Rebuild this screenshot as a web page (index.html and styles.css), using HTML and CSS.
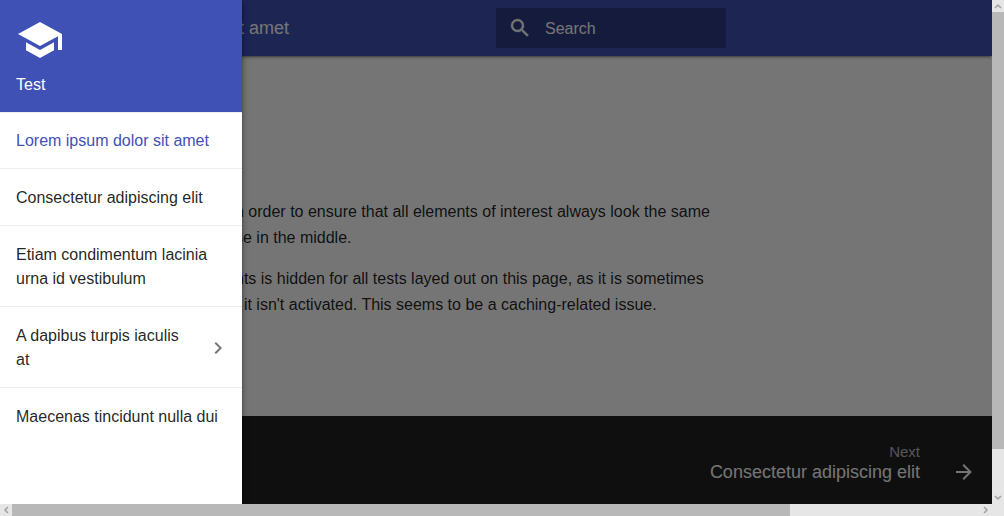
FILE: index.html
```html
<!DOCTYPE html>
<html lang="en">
<head>
<meta charset="utf-8">
<meta name="viewport" content="width=device-width, initial-scale=1">
<title>Lorem ipsum dolor sit amet</title>
<link rel="stylesheet" href="styles.css">
</head>
<body>
<div class="frame">
  <div class="page">
    <header class="header">
      <span class="header-title">Lorem ipsum dolor sit amet</span>
      <label class="search">
        <svg class="icon search-icon" viewBox="0 0 24 24" aria-hidden="true"><path d="M9.500 3A6.500 6.500 0 0 1 16 9.500c0 1.610-.590 3.090-1.560 4.230l.270.270h.790l5 5-1.500 1.500-5-5v-.790l-.270-.270A6.520 6.520 0 0 1 9.500 16a6.500 6.500 0 0 1 0-13m0 2C7 5 5 7 5 9.500S7 14 9.500 14 14 12 14 9.500 12 5 9.500 5z"/></svg>
        <input class="search-input" type="text" placeholder="Search" aria-label="Search">
      </label>
    </header>
    <main class="content">
      <p>n order to ensure that all elements of interest always look the same<br>se in the middle.</p>
      <p>nts is hidden for all tests layed out on this page, as it is sometimes<br>f it isn't activated. This seems to be a caching-related issue.</p>
    </main>
    <footer class="footer">
      <a class="next" href="#next">
        <span class="next-text"><span class="next-label">Next</span><span class="next-title">Consectetur adipiscing elit</span></span>
        <svg class="icon" viewBox="0 0 24 24" aria-hidden="true"><path d="M4 11v2h12l-5.500 5.500 1.420 1.420L19.840 12l-7.920-7.920L10.500 5.500 16 11H4z"/></svg>
      </a>
    </footer>
    <div class="overlay"></div>
    <nav class="drawer" aria-label="Navigation">
      <div class="drawer-head">
        <svg class="logo" viewBox="0 0 24 24" aria-hidden="true"><path d="M12 3L1 9l11 6 9-4.910V17h2V9M5 13.180v4L12 21l7-3.820v-4L12 17l-7-3.820z"/></svg>
        <span>Test</span>
      </div>
      <ul class="nav-list">
        <li><a class="active" href="#lorem">Lorem ipsum dolor sit amet</a></li>
        <li><a href="#consectetur">Consectetur adipiscing elit</a></li>
        <li><a href="#etiam">Etiam condimentum lacinia urna id vestibulum</a></li>
        <li><a class="nested" href="#dapibus"><span>A dapibus turpis iaculis at</span><svg class="chevron" viewBox="0 0 24 24" aria-hidden="true"><path d="M8.590 16.580L13.170 12 8.590 7.410 10 6l6 6-6 6-1.410-1.420z"/></svg></a></li>
        <li><a href="#maecenas">Maecenas tincidunt nulla dui</a></li>
      </ul>
    </nav>
  </div>
  <div class="bar bar-vertical">
    <svg class="arrow" viewBox="0 0 12 12" aria-hidden="true"><path d="M3 8l3-3 3 3"/></svg>
    <div class="track"><div class="thumb"></div></div>
    <svg class="arrow" viewBox="0 0 12 12" aria-hidden="true"><path d="M3 4l3 3 3-3"/></svg>
  </div>
  <div class="bar bar-horizontal">
    <svg class="arrow" viewBox="0 0 12 12" aria-hidden="true"><path d="M8 3L5 6l3 3"/></svg>
    <div class="track"><div class="thumb"></div></div>
    <svg class="arrow" viewBox="0 0 12 12" aria-hidden="true"><path d="M4 3l3 3-3 3"/></svg>
  </div>
</div>
</body>
</html>
```
FILE: styles.css
```css
* { box-sizing: border-box; }

body {
  margin: 0;
  font: 16px/24px "Liberation Sans", Arial, sans-serif;
  color: rgba(0, 0, 0, 0.87);
}

a { color: inherit; text-decoration: none; }

.frame {
  display: grid;
  grid-template: minmax(0, 1fr) 12px / minmax(0, 1fr) 12px;
  height: 100vh;
  overflow: hidden;
  background: #e6e6e6;
}

.page {
  position: relative;
  display: flex;
  flex-direction: column;
  overflow: hidden;
  background: #fff;
}

.header {
  display: flex;
  align-items: center;
  justify-content: space-between;
  height: 56px;
  padding: 0 266px 0 72px;
  background: #3f51b5;
  color: #fff;
  box-shadow: 0 2px 2px rgba(0, 0, 0, 0.14), 0 1px 5px rgba(0, 0, 0, 0.12), 0 3px 1px -2px rgba(0, 0, 0, 0.2);
  z-index: 1;
}

.header-title { font-size: 18px; white-space: nowrap; }

.search {
  display: flex;
  align-items: center;
  gap: 13px;
  width: 230px;
  height: 40px;
  padding: 0 12px;
  border-radius: 2px;
  background: rgba(0, 0, 0, 0.26);
}

.icon { flex: none; width: 24px; height: 24px; fill: currentColor; }

.search-icon { stroke: currentColor; stroke-width: 0.4; }

.search-input {
  flex: 1;
  min-width: 0;
  padding: 2px 0 0;
  border: 0;
  outline: 0;
  background: none;
  font: inherit;
  color: inherit;
}

.search-input::placeholder { color: inherit; opacity: 1; }

.content {
  flex: 1;
  padding: 143px 0 0 235px;
  line-height: 26px;
  white-space: nowrap;
}

.content p { margin: 0 0 15px; }

.footer {
  display: flex;
  justify-content: flex-end;
  height: 88px;
  padding: 24px 16px 0;
  background: #212121;
  color: #fff;
}

.next { display: flex; align-items: flex-end; gap: 32px; height: 44px; }

.next-text { display: flex; flex-direction: column; text-align: right; }

.next-label { font-size: 15px; line-height: 16px; color: rgba(255, 255, 255, 0.7); }

.next-title { font-size: 18px; line-height: 24px; }

.overlay {
  position: absolute;
  inset: 0;
  z-index: 2;
  background: rgba(0, 0, 0, 0.54);
}

.drawer {
  position: absolute;
  top: 0;
  bottom: 0;
  left: 0;
  z-index: 3;
  width: 242px;
  background: #fff;
  box-shadow: 0 2px 2px rgba(0, 0, 0, 0.14), 0 1px 5px rgba(0, 0, 0, 0.3), 0 5px 8px rgba(0, 0, 0, 0.2);
}

.drawer-head {
  display: flex;
  flex-direction: column;
  gap: 9px;
  padding: 16px 16px 15px;
  background: #3f51b5;
  color: #fff;
}

.logo { width: 48px; height: 48px; fill: currentColor; }

.nav-list {
  margin: 0;
  padding: 0;
  list-style: none;
  box-shadow: inset 0 1px rgba(0, 0, 0, 0.07);
}

.nav-list li + li { border-top: 1px solid rgba(0, 0, 0, 0.07); }

.nav-list a { display: block; padding: 17px 16px 15px; }

.nav-list .active { color: #3f51b5; }

.nav-list .nested { display: flex; align-items: center; gap: 16px; padding-right: 12px; }

.nested span { flex: 1; }

.chevron { flex: none; width: 24px; height: 24px; fill: rgba(0, 0, 0, 0.54); }

.bar { display: flex; background: #e6e6e6; }

.bar-vertical { flex-direction: column; }

.track { display: flex; flex: 1; }

.bar-vertical .track { flex-direction: column; }

.thumb { background: #b8b8b8; }

.bar-vertical .thumb { height: 91%; }

.bar-horizontal .thumb { width: 80.4%; }

.arrow {
  flex: none;
  width: 12px;
  height: 12px;
  fill: none;
  stroke: #a0a0a0;
  stroke-width: 1.5;
}
```
